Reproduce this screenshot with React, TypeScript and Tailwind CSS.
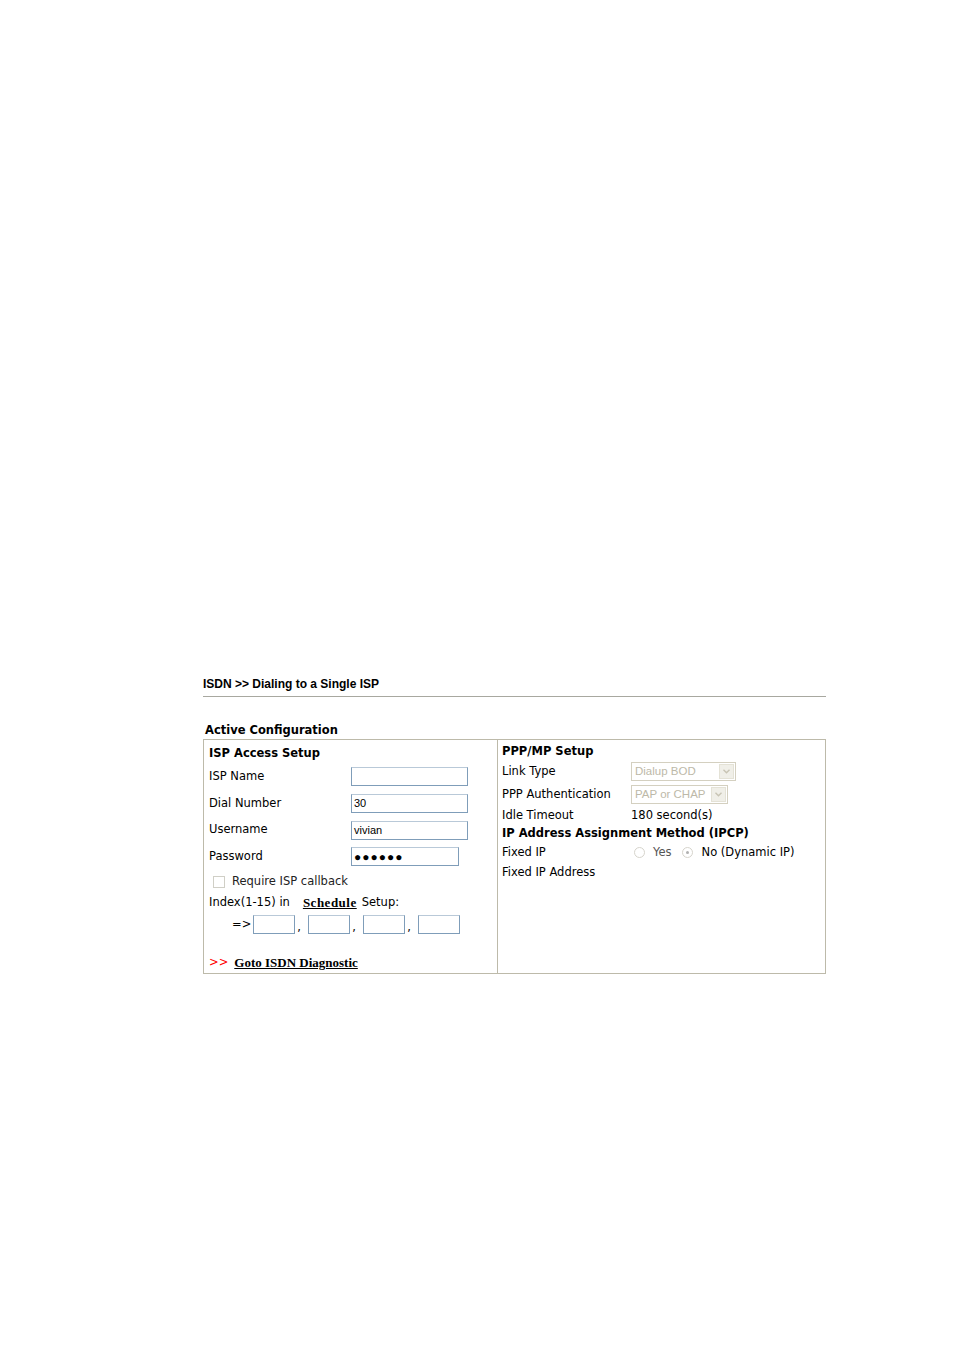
const body = { fontFamily: '"DejaVu Sans", Verdana, sans-serif' };
const link = { fontFamily: '"Liberation Serif", "Times New Roman", serif', fontSize: '13px' };

function TextBox({ w, value, pw }: { w: string; value?: string; pw?: boolean }) {
  return (
    <div
      className={`${w} h-[19px] border border-[#7f9db9] border-t-[#b9c9d8] bg-white flex items-center px-[2px] text-[11px] text-black`}
      style={{ fontFamily: '"Liberation Sans", Arial, sans-serif' }}
    >
      {pw ? <span className="tracking-[1px] text-[12px] leading-none">●●●●●●</span> : value}
    </div>
  );
}

function Select({ w, value }: { w: string; value: string }) {
  return (
    <div className={`${w} h-[19px] border border-[#d4d0c0] bg-white flex items-center justify-between pl-[3px] pr-[1px]`}>
      <span className="text-[11.5px] text-[#bdb9a8]" style={{ fontFamily: '"Liberation Sans", Arial, sans-serif' }}>
        {value}
      </span>
      <span className="w-[15px] h-[15px] bg-[#f0efe8] border border-[#e4e2d6] flex items-center justify-center">
        <svg width="7" height="5" viewBox="0 0 7 5">
          <path d="M0.5 0.8 L3.5 3.8 L6.5 0.8" stroke="#c8c4b4" strokeWidth="1.4" fill="none" />
        </svg>
      </span>
    </div>
  );
}

function Radio({ checked }: { checked?: boolean }) {
  return (
    <span className="w-[11px] h-[11px] rounded-full border border-[#d6d4cc] bg-white flex items-center justify-center">
      {checked && <span className="w-[3px] h-[3px] rounded-full bg-[#b0b0b0]" />}
    </span>
  );
}

function Row({ label, h, lw, children }: { label: string; h: string; lw: string; children?: React.ReactNode }) {
  return (
    <div className={`flex items-center ${h}`}>
      <span className={`${lw} shrink-0`}>{label}</span>
      {children}
    </div>
  );
}

function Comma() {
  return <span className="w-[13px] pl-[2px] self-end mb-[5px] leading-none">,</span>;
}

export default function App() {
  return (
    <div className="min-h-[1351px] bg-white text-black">
      <div className="pt-[676px] pl-[203px] w-[826px]">
        <div className="text-[12px] font-bold h-[16px] leading-[16px]" style={{ fontFamily: '"Liberation Sans", Tahoma, sans-serif' }}>
          ISDN &gt;&gt; Dialing to a Single ISP
        </div>
        <div className="h-px bg-[#a8a8a0] mt-[4px] w-[623px]" />
        <div className="mt-[25px] pl-[2px] text-[11.5px] font-bold h-[17px] leading-[17px]" style={body}>
          Active Configuration
        </div>
        <div className="flex w-[623px] h-[235px] overflow-hidden border border-[#bdbaaa] text-[11.5px]" style={body}>
          <div className="w-[294px] border-r border-[#bdbaaa] pl-[5px] pt-[4px]">
            <div className="font-bold h-[19px] flex items-center">ISP Access Setup</div>
            <Row label="ISP Name" h="h-[27px]" lw="w-[142px]">
              <TextBox w="w-[117px]" />
            </Row>
            <Row label="Dial Number" h="h-[27px]" lw="w-[142px]">
              <TextBox w="w-[117px]" value="30" />
            </Row>
            <Row label="Username" h="h-[26px]" lw="w-[142px]">
              <TextBox w="w-[117px]" value="vivian" />
            </Row>
            <Row label="Password" h="h-[27px]" lw="w-[142px]">
              <TextBox w="w-[108px]" pw />
            </Row>
            <div className="flex items-center h-[24px] pl-[4px]">
              <span className="w-[12px] h-[12px] border border-[#d0cfc6] bg-white mr-[7px]" />
              <span className="text-[#222]">Require ISP callback</span>
            </div>
            <div className="flex items-center h-[17px]">
              <span>Index(1-15) in</span>
              <span className="ml-[13px] font-bold underline tracking-[0.5px]" style={link}>
                Schedule
              </span>
              <span className="ml-[5px]">Setup:</span>
            </div>
            <div className="flex items-center h-[27px] pl-[23px]">
              <span className="mr-[2px]">=&gt;</span>
              <TextBox w="w-[42px]" />
              <Comma />
              <TextBox w="w-[42px]" />
              <Comma />
              <TextBox w="w-[42px]" />
              <Comma />
              <TextBox w="w-[42px]" />
            </div>
            <div className="flex items-center h-[37px] pt-[12px]">
              <span className="text-[#ff0000] mr-[6px]">&gt;&gt;</span>
              <span className="font-bold underline" style={link}>
                Goto ISDN Diagnostic
              </span>
            </div>
          </div>
          <div className="flex-1 pl-[4px] pt-[3px]">
            <div className="font-bold h-[17px] flex items-center">PPP/MP Setup</div>
            <Row label="Link Type" h="h-[23px]" lw="w-[129px]">
              <Select w="w-[105px]" value="Dialup BOD" />
            </Row>
            <Row label="PPP Authentication" h="h-[23px]" lw="w-[129px]">
              <Select w="w-[97px]" value="PAP or CHAP" />
            </Row>
            <Row label="Idle Timeout" h="h-[19px]" lw="w-[129px]">
              <span>180 second(s)</span>
            </Row>
            <div className="font-bold h-[17px] flex items-center">IP Address Assignment Method (IPCP)</div>
            <Row label="Fixed IP" h="h-[21px]" lw="w-[129px]">
              <span className="flex items-center ml-[3px]">
                <Radio />
                <span className="text-[#555] ml-[8px]">Yes</span>
                <span className="ml-[10px]"><Radio checked /></span>
                <span className="ml-[9px]">No (Dynamic IP)</span>
              </span>
            </Row>
            <Row label="Fixed IP Address" h="h-[19px]" lw="w-[129px]" />
          </div>
        </div>
      </div>
    </div>
  );
}
